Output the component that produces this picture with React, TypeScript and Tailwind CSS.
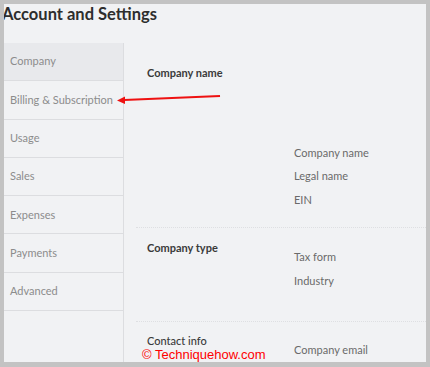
import React from 'react';

const navItems = ['Company', 'Billing & Subscription', 'Usage', 'Sales', 'Expenses', 'Payments', 'Advanced'];

const App: React.FC = () => {
  return (
    <div className="w-[430px] h-[367px] bg-[#c3c3c3] pt-[4px] pl-[4px] pr-[4px] pb-[5px] font-['Lato','Open_Sans',sans-serif]">
      <div className="relative w-full h-full bg-[#f1f2f4] overflow-hidden flex flex-col">
        <h1 className="ml-[-2px] mt-0 text-[16.5px] leading-[20px] font-bold text-[#2d2d2d]">Account and Settings</h1>

        <div className="flex flex-1 mt-[19px]">
          {/* Sidebar */}
          <div className="w-[120px] border-r border-[#dcdde0] flex flex-col">
            {navItems.map((item, i) => (
              <div
                key={item}
                className={`h-[38.3px] flex items-center pl-[6px] text-[11px] text-[#8c8c8c] border-b border-[#dcdde0] ${i === 0 ? 'bg-[#e8e9ec]' : ''}`}
              >
                {item}
              </div>
            ))}
          </div>

          {/* Main */}
          <div className="flex-1 flex flex-col">
            <div className="ml-[12px] h-[185px] flex flex-col pl-[11px] pt-[22px] border-b border-dotted border-[#dedfe2]">
              <div className="text-[11px] font-bold text-[#3a3a3a]">Company name</div>
              <div className="ml-[147px] mt-[63px] flex flex-col gap-[7px] text-[11px] text-[#6a6a6a]">
                <span>Company name</span>
                <span>Legal name</span>
                <span>EIN</span>
              </div>
            </div>
            <div className="ml-[12px] h-[94px] flex pl-[11px] pt-[12px] border-b border-dotted border-[#dedfe2]">
              <div className="w-[147px] text-[11px] font-bold text-[#3a3a3a]">Company type</div>
              <div className="mt-[9px] flex flex-col gap-[7px] text-[11px] text-[#6a6a6a]">
                <span>Tax form</span>
                <span>Industry</span>
              </div>
            </div>
            <div className="ml-[12px] flex pl-[11px] pt-[11px]">
              <div className="w-[147px] text-[11px] font-medium text-[#3a3a3a]">Contact info</div>
              <div className="mt-[9px] text-[11px] text-[#6a6a6a]">Company email</div>
            </div>
          </div>
        </div>

        {/* Annotation arrow */}
        <svg className="absolute left-[112px] top-[89px]" width="106" height="14" viewBox="0 0 106 14">
          <line x1="104" y1="3" x2="8" y2="7" stroke="#ee1111" strokeWidth="2" />
          <polygon points="1,7.5 9,3.5 9,11" fill="#ee1111" />
        </svg>

        {/* Watermark */}
        <div className="absolute left-[138px] top-[343px] text-[13px] leading-[16px] font-['Liberation_Sans',sans-serif] text-[#ff0000]">
          © Techniquehow.com
        </div>
      </div>
    </div>
  );
};

export default App;
